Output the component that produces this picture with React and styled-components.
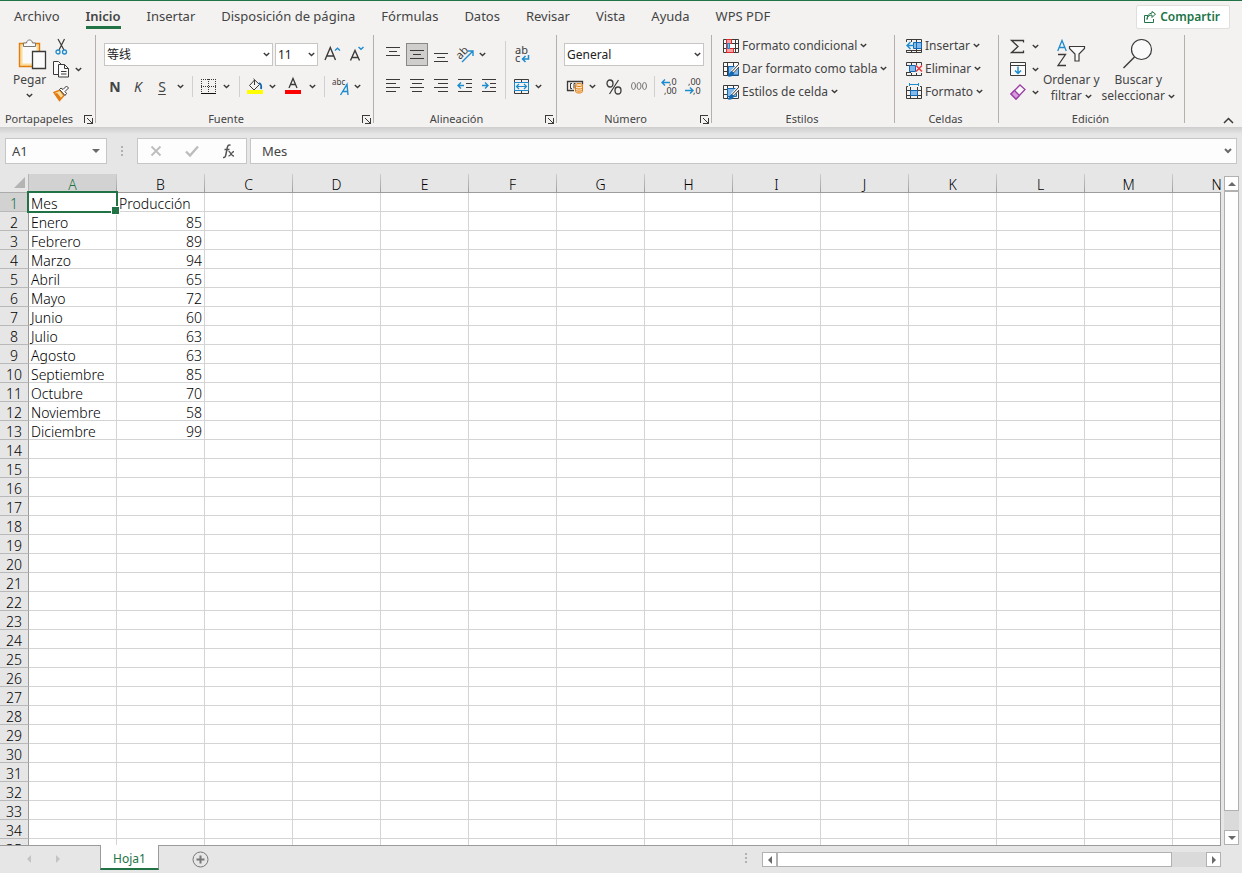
import React from "react";
import styled, { createGlobalStyle, css } from "styled-components";

const INK = "#3b3a39";
const BLUE = "#1e8bcd";
const GREEN = "#217346";

const GlobalStyle = createGlobalStyle`
  * {
    box-sizing: border-box;
  }
  body {
    margin: 0;
    background: #e6e6e6;
    color: #444444;
    font-family: "Noto Sans", "Noto Sans CJK SC", sans-serif;
    font-size: 12px;
    line-height: 16px;
  }
  button, input, select {
    margin: 0;
    padding: 0;
    border: 0;
    background: none;
    color: inherit;
    font: inherit;
  }
  svg {
    display: block;
    flex: none;
    overflow: visible;
  }
`;

const Page = styled.div`
  display: flex;
  flex-direction: column;
  height: 100vh;
  overflow: hidden;
`;

/* ---------- ribbon ---------- */

const Ribbon = styled.header`
  border-top: 1px solid ${GREEN};
  background: #f3f2f1;
`;

const TabBar = styled.nav`
  display: flex;
  align-items: center;
  gap: 26px;
  height: 34px;
  padding: 0 12px 2px 14px;
  font-size: 13px;
`;

const TabLink = styled.a`
  height: 24px;
  padding-top: 3px;
  border-bottom: 3px solid ${(p) => (p.$active ? GREEN : "transparent")};
  color: #444444;
  font-weight: ${(p) => (p.$active ? 600 : 400)};
  line-height: 17px;
  text-decoration: none;
  white-space: nowrap;
`;

const ShareButton = styled.button`
  display: flex;
  align-items: center;
  gap: 4px;
  height: 24px;
  margin-left: auto;
  padding: 0 9px 0 7px;
  border: 1px solid #e1dfdd;
  border-radius: 2px;
  background: #ffffff;
  color: ${GREEN};
  font-size: 12px;
  font-weight: 600;
`;

const RibbonBody = styled.div`
  display: flex;
  height: 92px;
`;

const Group = styled.section`
  position: relative;
  display: flex;
  flex-direction: column;
  min-width: ${(p) => p.$width}px;
  padding-left: ${(p) => p.$pad || 0}px;

  &::after {
    content: "";
    position: absolute;
    top: 0;
    right: 0;
    bottom: 4px;
    width: 1px;
    background: #b3b0ad;
  }
`;

const GroupBody = styled.div`
  display: flex;
  flex: 1;
  gap: ${(p) => p.$gap || 0}px;
`;

const GroupFooter = styled.div`
  display: flex;
  align-items: center;
  gap: 6px;
  height: 16px;
  margin-left: -${(p) => p.$pad || 0}px;
  padding-right: 3px;
  font-size: 11px;
`;

const GroupLabel = styled.h2`
  flex: 1;
  margin: 0;
  font-size: inherit;
  font-weight: 400;
  text-align: center;
`;

const Rows = styled.div`
  display: flex;
  flex-direction: column;
  gap: ${(p) => p.$gap || 0}px;
  padding-top: ${(p) => p.$top || 0}px;
`;

const Row = styled.div`
  display: flex;
  align-items: center;
  gap: ${(p) => p.$gap || 0}px;
  height: 23px;
`;

const ToolButton = styled.button`
  display: flex;
  align-items: center;
  justify-content: center;
  width: ${(p) => p.$width || 22}px;
  height: 23px;
  ${(p) =>
    p.$active &&
    css`
      border: 1px solid #8a8886;
      background: #cfcecd;
    `}
`;

const TextButton = styled.button`
  display: flex;
  align-items: center;
  gap: 3px;
  height: 23px;
  padding-bottom: 2px;
  white-space: nowrap;
`;

const BigButton = styled.button`
  display: flex;
  flex-direction: column;
  align-items: center;
  padding-top: 4px;
  white-space: nowrap;

  svg + span {
    margin-top: 2px;
  }
  > span + svg {
    margin-top: 5px;
  }
`;

const CaptionLine = styled.span`
  display: flex;
  align-items: center;
  gap: 3px;
`;

const Letter = styled.span`
  font-size: 14px;
  font-weight: ${(p) => (p.$bold ? 700 : 400)};
  font-style: ${(p) => (p.$italic ? "italic" : "normal")};
  text-decoration: ${(p) => (p.$underline ? "underline" : "none")};
  text-underline-offset: 2px;
`;

const Divider = styled.span`
  width: 1px;
  height: ${(p) => p.$height || 21}px;
  margin: 0 ${(p) => p.$margin || 6}px;
  background: #d2d0ce;
`;

const SelectWrap = styled.label`
  display: grid;
  align-items: center;
  width: ${(p) => p.$width}px;
  height: 23px;

  select,
  svg {
    grid-area: 1 / 1;
  }
  svg {
    justify-self: end;
    margin-right: 3px;
    pointer-events: none;
  }
`;

const Select = styled.select`
  width: 100%;
  height: 23px;
  padding: 0 2px;
  border: 1px solid #c8c6c4;
  border-radius: 0;
  background: #ffffff;
  color: #222222;
  appearance: none;
`;

const CollapseButton = styled.button`
  align-self: flex-end;
  margin-left: auto;
  padding: 0 8px 3px;
`;

/* ---------- formula bar ---------- */

const FormulaBar = styled.div`
  display: flex;
  height: 47px;
  padding: 11px 5px 0;
  background: linear-gradient(#cdcdcd, #e6e6e6 7px);
  font-size: 13px;
`;

const NameBox = styled.label`
  display: flex;
  align-items: center;
  width: 102px;
  height: 26px;
  padding-right: 6px;
  border: 1px solid #c6c6c6;
  background: #fdfdfd;
`;

const BarInput = styled.input`
  flex: 1;
  min-width: 0;
  height: 24px;
  padding-left: ${(p) => p.$pad}px;
  outline: none;
`;

const Grip = styled.span`
  display: flex;
  align-items: center;
  justify-content: center;
  width: 30px;
  height: 26px;
`;

const FormulaButtons = styled.div`
  display: flex;
  align-items: center;
  width: 110px;
  height: 26px;
  margin-right: 3px;
  border: 1px solid #c6c6c6;
  background: #fdfdfd;

  button {
    display: flex;
    flex: 1;
    justify-content: center;
  }
`;

const FormulaField = styled.div`
  display: flex;
  flex: 1;
  align-items: center;
  height: 26px;
  padding-right: 4px;
  border: 1px solid #c6c6c6;
  background: #fdfdfd;
`;

/* ---------- sheet ---------- */

const SheetArea = styled.main`
  display: flex;
  flex: 1;
  min-height: 0;
`;

const GridViewport = styled.div`
  position: relative;
  flex: 1;
  min-width: 0;
  overflow: hidden;

  &::after {
    content: "";
    position: absolute;
    top: 18px;
    right: 0;
    bottom: 0;
    width: 1px;
    background: #9b9b9b;
  }
`;

const SheetTable = styled.table`
  width: 1261px;
  border-spacing: 0;
  table-layout: fixed;
  color: #000000;
  font-size: 14px;
  font-weight: 350;
  line-height: 14px;
`;

const headFill = css`
  background-color: ${(p) => (p.$active ? "#d2d2d2" : "#e6e6e6")};
  color: ${(p) => (p.$active ? GREEN : "#000000")};
  font-weight: 350;
`;

const ColumnHead = styled.th`
  ${headFill}
  height: 19px;
  padding: 4px 0 0;
  border-right: 1px solid;
  border-image: linear-gradient(#d0d0d0, #9b9b9b) 1;
  border-bottom: 1px solid #9b9b9b;
  text-align: center;
`;

const Corner = styled.th`
  width: 29px;
  height: 19px;
  padding: 0 0 0 14px;
  border-right: 1px solid #b5b5b5;
  border-bottom: 1px solid #ababab;
  background: #e6e6e6;
`;

const RowHead = styled.th`
  ${headFill}
  height: 19px;
  padding: 4px 0 0;
  border-right: 1px solid #9b9b9b;
  border-bottom: 1px solid #b9b9b9;
  text-align: center;
`;

const Cell = styled.td`
  position: relative;
  height: 19px;
  padding: 4px 2px 0;
  border-right: 1px solid #d4d4d4;
  border-bottom: 1px solid #d4d4d4;
  background: #ffffff;
  text-align: ${(p) => (p.$number ? "right" : "left")};
  white-space: nowrap;
`;

const Selection = styled.span`
  position: absolute;
  inset: -2px;
  z-index: 1;
  border: 2px solid ${GREEN};

  &::after {
    content: "";
    position: absolute;
    right: -4px;
    bottom: -4px;
    width: 7px;
    height: 7px;
    border: 1px solid #ffffff;
    background: ${GREEN};
  }
`;

const ScrollColumn = styled.div`
  display: flex;
  flex-direction: column;
  width: 21px;
  padding: 2px 3px 0;
`;

const ScrollRow = styled.div`
  display: flex;
  flex: 0 1 459px;
  height: 15px;
  margin: 7px 21px 0 1px;
`;

const ScrollButton = styled.button`
  display: flex;
  flex: none;
  align-items: center;
  justify-content: center;
  width: 15px;
  height: 15px;
  border: 1px solid #b1b1b1;
  background: #ffffff;
`;

const Track = styled.div`
  display: flex;
  flex: 1;
  flex-direction: ${(p) => (p.$vertical ? "column" : "row")};
  background: #dadada;
`;

const Thumb = styled.div`
  flex: 0 0 ${(p) => p.$size};
  border: 1px solid #b1b1b1;
  background: #ffffff;
`;

const SheetBar = styled.footer`
  display: flex;
  height: 28px;
  background: linear-gradient(to right, #9b9b9b calc(100% - 21px), #e6e6e6 0) top / 100% 1px no-repeat;
`;

const SheetNav = styled.div`
  display: flex;
  align-items: center;
  gap: 23px;
  width: 100px;
  padding-left: 26px;
`;

const SheetTab = styled.a`
  height: 25px;
  padding: 6px 12px 0;
  border: 1px solid #9b9b9b;
  border-top: 0;
  border-bottom: 2px solid ${GREEN};
  background: #ffffff;
  color: ${GREEN};
  text-decoration: none;
`;

const AddSheet = styled.button`
  display: flex;
  align-items: center;
  margin: 0 auto 0 33px;
`;

/* ---------- icons ---------- */

const Icon = ({ w = 16, h = 16, crisp, children }) => (
  <svg
    width={w}
    height={h}
    viewBox={`0 0 ${w} ${h}`}
    fill="none"
    stroke={INK}
    shapeRendering={crisp ? "crispEdges" : undefined}
    aria-hidden="true"
  >
    {children}
  </svg>
);

const Chevron = () => (
  <Icon w={7} h={5}>
    <path d="M.8 1l2.7 2.6L6.2 1" strokeWidth="1.4" />
  </Icon>
);

const PasteIcon = () => (
  <Icon w={32} h={31}>
    <g transform="translate(4)">
      <path d="M1.500 4.500h20v23h-20z" fill="#fbdc9a" stroke="#e07c10" strokeWidth="1.400" />
      <path d="M4.500 7.500h14v17h-14z" fill="#fafafa" stroke="none" />
      <path d="M5.500 7.500v-3.500h3c.3-2 1.300-3 3-3s2.700 1 3 3h3v3.500z" fill="#fafafa" stroke="#7a7876" />
      <path d="M14.500 12.500h13v17h-13z" fill="#fafafa" strokeWidth="1.300" />
    </g>
  </Icon>
);

const CutIcon = () => (
  <Icon w={15}>
    <path d="M4 0l6 11M10.500 0L5 11" strokeWidth="1.200" />
    <circle cx="4" cy="13" r="2" stroke={BLUE} strokeWidth="1.300" />
    <circle cx="10.500" cy="13" r="2" stroke={BLUE} strokeWidth="1.300" />
  </Icon>
);

const CopyIcon = () => (
  <Icon w={17} h={17}>
    <path d="M5.500 13.500h-5V.5h5l3 3M5.500 3.500h6l4 4v8.500h-10z" fill="#fafafa" />
    <path d="M11.500 3.500v4h4M8 10.500h5.500M8 13h5.500" />
  </Icon>
);

const BrushIcon = () => (
  <Icon>
    <path d="M1 7.500l6-2.500 4 5.500-4.500 5z" fill="#fbdc9a" stroke="#e07c10" strokeWidth="1.400" />
    <path d="M3 8.500l4.500 5.500" stroke="#e07c10" strokeWidth="2.400" />
    <path d="M6.500 4.500l5.500 6 1.500-2-1.500-2 3.500-3.500-2-2-3.500 3.500-2-1.500z" fill="#fafafa" />
  </Icon>
);

const LauncherIcon = () => (
  <Icon w={9} h={9} crisp>
    <path d="M.5 8V.5H8M8.500 3v5.500H3M3 3l5 5" />
  </Icon>
);

const FontSizeIcon = ({ small }) => (
  <Icon w={17} h={18}>
    {small ? (
      <path d="M1.500 14.500L6 4.500l4.500 10M3 11.500h6" strokeWidth="1.400" />
    ) : (
      <path d="M1 14L6.300 1.500 11.500 14M3 10h6.600" strokeWidth="1.400" />
    )}
    <path d={small ? "M9.500 1l2.500 2.300L14.500 1" : "M11 4.500l2.500-2.300L16 4.500"} stroke={BLUE} strokeWidth="1.400" />
  </Icon>
);

const BordersIcon = () => (
  <Icon crisp>
    <path d="M.5 0v14M14.500 0v14M7.500 0v14M0 .5h15M0 7.500h15" strokeDasharray="1 1" />
    <path d="M0 14.500h15" stroke="#111111" />
  </Icon>
);

const FillIcon = () => (
  <Icon w={16} h={17}>
    <path d="M7.500 2L2.500 7.500 7 12l5.500-5.500L6.500.8M7.500 2v5" />
    <path d="M12 5c2 .5 2.500 3 2 6" stroke="#1268b3" strokeWidth="1.800" />
    <path d="M0 12h16v4H0z" fill="#ffff00" stroke="none" />
  </Icon>
);

const FontColorIcon = () => (
  <Icon w={16} h={17}>
    <path d="M4 10L8 .5 12 10M5.500 6.500h5" strokeWidth="1.300" />
    <path d="M0 12h16v4H0z" fill="#ff0000" stroke="none" />
  </Icon>
);

const PhoneticIcon = () => (
  <Icon w={18} h={18}>
    <text x="0" y="7" fontSize="8" fill={INK} stroke="none">abc</text>
    <path d="M8.500 17l6.500-10.500 1 10.500M10.500 13.500h5.500" stroke={BLUE} strokeWidth="1.400" />
  </Icon>
);

// Each entry is a horizontal stroke: [start, end, y]
const LinesIcon = ({ lines, arrow }) => (
  <Icon w={15} h={15} crisp>
    {lines.map(([x1, x2, y]) => (
      <path key={y} d={`M${x1} ${y + 0.5}H${x2}`} />
    ))}
    {arrow && (
      <path
        d={arrow === "left" ? "M6 6.500H0M3 3.500l-3 3 3 3" : "M0 6.500h6M3 3.500l3 3-3 3"}
        stroke={BLUE}
        strokeWidth="1.400"
        shapeRendering="auto"
      />
    )}
  </Icon>
);

const OrientationIcon = () => (
  <Icon w={17} h={16}>
    <text x="0" y="10" fontSize="11" fill={INK} stroke="none" transform="rotate(-45 5 8)">ab</text>
    <path d="M5 15L15.500 4.500M10.500 4h5.500v5" stroke={BLUE} strokeWidth="1.400" />
  </Icon>
);

const WrapIcon = () => (
  <Icon w={15} h={18}>
    <text x="0" y="8" fontSize="11" fill={INK} stroke="none">ab</text>
    <text x="0" y="16" fontSize="11" fill={INK} stroke="none">c</text>
    <path d="M13.500 9v4H7.500M10.500 10l-3 3 3 3" stroke={BLUE} strokeWidth="1.500" />
  </Icon>
);

const MergeIcon = () => (
  <Icon w={15} h={15}>
    <path d="M.5.5h14v14H.5zM7.500 0v3M7.500 12v3" />
    <path d="M.5 3.500h14v8H.5z" fill="#f3f2f1" stroke={BLUE} />
    <path d="M2.500 7.500h10M5 5l-2.500 2.500L5 10M10 5l2.500 2.500L10 10" stroke={BLUE} strokeWidth="1.200" />
  </Icon>
);

const CurrencyIcon = () => (
  <Icon w={17} h={15}>
    <path d="M7 11.500H.5v-9h15v3" strokeWidth="1.300" />
    <path d="M5 4.500H3.500v5H5M8.500 4.500H7v5M12 4.500h-1.500" />
    <path d="M8.500 6v6.500c0 2 7 2 7 0V6" fill="#fce3c3" stroke="#e07c10" />
    <ellipse cx="12" cy="6" rx="3.500" ry="1.500" fill="#fce3c3" stroke="#e07c10" />
    <path d="M8.500 8.500c0 2 7 2 7 0M8.500 10.700c0 2 7 2 7 0" stroke="#e07c10" />
  </Icon>
);

const PercentIcon = () => (
  <Icon w={16} h={16}>
    <ellipse cx="4" cy="4.500" rx="3" ry="3.500" strokeWidth="1.300" />
    <ellipse cx="12" cy="11.500" rx="3" ry="3.500" strokeWidth="1.300" />
    <path d="M12.500 1l-9 14" strokeWidth="1.200" />
  </Icon>
);

const ThousandsIcon = () => (
  <Icon w={17} h={12}>
    {[2.5, 8, 13.5].map((x) => (
      <ellipse key={x} cx={x} cy="5" rx="2" ry="3.500" stroke="#7a7876" />
    ))}
  </Icon>
);

const DecimalIcon = ({ less }) => (
  <Icon w={17} h={17}>
    <text x={less ? 3 : 8} y="7" fontSize="9" fill={INK} stroke="none">{less ? ",00" : ",0"}</text>
    <text x={less ? 8 : 3} y="16" fontSize="9" fill={INK} stroke="none">{less ? ",0" : ",00"}</text>
    <path
      d={less ? "M0 12.500h8M5 9.500l3 3-3 3" : "M9 4.500H1M4 1.500l-3 3 3 3"}
      stroke={BLUE}
      strokeWidth="1.400"
    />
  </Icon>
);

const ConditionalIcon = () => (
  <Icon>
    <path d="M.5 1.500h15v13H.5z" fill="#fafafa" />
    <path d="M0 5.500h16M0 10.500h16M4.500 1v14M12.500 1v14" />
    <path d="M3.500 1.500h5v4h-5zM3.500 10.500h7v4h-7z" fill="#f7a1a6" stroke="#e02b2b" />
    <path d="M4.500 5.500h2v5h-2z" fill="#83b9ea" stroke={BLUE} />
    <path d="M3.500 5v6" stroke="#e02b2b" />
  </Icon>
);

const PenIcon = ({ table }) => (
  <Icon>
    <path d="M.5 1.500h15v13H.5z" fill="#fafafa" />
    <path d="M0 5.500h16M0 10.500h5M4.500 1v14M10.500 1v4" />
    {table ? (
      <path d="M5.500 5.500h10V14h-10z" fill="#83b9ea" stroke="#1268b3" />
    ) : (
      <path d="M4.500 4.500h9v8h-9z" fill="#83b9ea" stroke="#1268b3" />
    )}
    <path d="M15.500 4L9 11.500" stroke="#f3f2f1" strokeWidth="4" />
    <path d="M15.500 3.500L9 10.500l1.500 1.500L16 6" fill="#fafafa" />
    <path d="M9 10.500c-2 0-2 3-4 4.500 3 .5 5.500-.5 5.500-3z" fill="#1268b3" stroke="#1268b3" />
  </Icon>
);

const InsertCellsIcon = () => (
  <Icon>
    <path d="M.5 4V1.500h15v13H.5V12M5.500 1v3M10.500 1v14M0 12.500h16M5.500 12v3" />
    <path d="M7.500 4.500h8v6h-8z" fill="#83b9ea" stroke="#1268b3" />
    <path d="M10.500 5v6" stroke="#1268b3" />
    <path d="M8 7.500H1M4.500 4L1 7.500 4.500 11" stroke={BLUE} strokeWidth="1.400" />
  </Icon>
);

const DeleteCellsIcon = () => (
  <Icon>
    <path d="M.5 4.500V1.500h15v3M5.500 1v3M10.500 1v3M.5 12v2.500h15V12M5.500 12v3M10.500 12v3M0 4.500h5M0 11.500h5" />
    <path d="M3.500 4.500h6v6h-6z" fill="#83b9ea" stroke="#1268b3" />
    <path d="M10 4.500l6 6M16 4.500l-6 6" stroke="#e8393f" strokeWidth="1.500" />
  </Icon>
);

const FormatCellsIcon = () => (
  <Icon>
    <path d="M3 .5h10M3.500-1v3M12.500-1v3" stroke={BLUE} />
    <path d="M2 2.500H.5v12h15v-12H14M4.500 3v12M11.500 3v12M0 6.500h16M0 11.500h16" />
    <path d="M4.500 6.500h7v5h-7z" fill="#83b9ea" stroke="#1268b3" />
  </Icon>
);

const SumIcon = () => (
  <Icon w={16} h={16}>
    <path d="M13.500 3.500v-2h-12L8 7.500l-6.500 6h12v-2" strokeWidth="1.300" />
  </Icon>
);

const FillDownIcon = () => (
  <Icon>
    <path d="M.5 .5h15v13H.5zM.5 3.500h15" fill="#fafafa" />
    <path d="M8 4.500v7M5 8.500l3 3 3-3" stroke={BLUE} strokeWidth="1.500" />
  </Icon>
);

const EraserIcon = () => (
  <Icon>
    <path d="M1 9L10 0l5 4.500-9 9.500z" fill="#fafafa" stroke="#9b3fa5" strokeWidth="1.300" />
    <path d="M1 9l3.500-3.500 5 5L6 14z" fill="#d89bdd" stroke="#9b3fa5" strokeWidth="1.300" />
  </Icon>
);

const SortIcon = () => (
  <Icon w={28} h={31}>
    <path d="M.7 12L5 1.500 9.300 12M2.300 8.500h5.500" stroke={BLUE} strokeWidth="1.300" />
    <path d="M1 15.500h7.500L1 26.500h8" strokeWidth="1.300" />
    <path d="M12.500 7.500h15v2l-5.500 5.500v7h-4v-7l-5.500-5.500z" fill="#fafafa" strokeWidth="1.200" />
  </Icon>
);

const SearchIcon = () => (
  <Icon w={30} h={31}>
    <circle cx="18.500" cy="10.500" r="10" fill="#fafafa" strokeWidth="1.200" />
    <path d="M11.500 18L.5 29" strokeWidth="1.400" />
  </Icon>
);

const ShareIcon = () => (
  <Icon w={12} h={12}>
    <path d="M4 4.500H.5v7h9V8M3 8.500c.5-3 2-4.500 5-4.500V6.500l3.500-3.500L8 .5V2C4.500 2.500 3 5 3 8.500z" stroke={GREEN} />
  </Icon>
);

const GripIcon = () => (
  <Icon w={2} h={10} crisp>
    <path d="M0 0h2v2H0zM0 4h2v2H0zM0 8h2v2H0z" fill="#b1b1b1" stroke="none" />
  </Icon>
);

const FxIcon = () => (
  <Icon w={13} h={15}>
    <path d="M1 13.500c2 .5 2.500-1 3-3.500l1.200-6C5.700 1.500 6.500.5 8.500 1.300M2.500 5.500h5" stroke="#555555" strokeWidth="1.500" />
    <path d="M6.500 7.500c2-.5 2.500 5 5.500 4.500M12 7.500c-2.500 0-3 4.500-5.500 4.500" stroke="#555555" strokeWidth="1.300" />
  </Icon>
);

const TRIANGLES = {
  left: "M5 0v8L1 4z",
  right: "M1 0v8l4-4z",
  up: "M0 5h8L4 1z",
  down: "M0 1h8L4 5z",
};

const Triangle = ({ dir, color = "#6a6a6a" }) => {
  const flat = dir === "up" || dir === "down";
  return (
    <Icon w={flat ? 8 : 6} h={flat ? 6 : 8}>
      <path d={TRIANGLES[dir]} fill={color} stroke="none" />
    </Icon>
  );
};

/* ---------- data ---------- */

const TABS = [
  "Archivo",
  "Inicio",
  "Insertar",
  "Disposición de página",
  "Fórmulas",
  "Datos",
  "Revisar",
  "Vista",
  "Ayuda",
  "WPS PDF",
];

const COLUMNS = "ABCDEFGHIJKLMN".split("");

const DATA = [
  ["Mes", "Producción"],
  ["Enero", 85],
  ["Febrero", 89],
  ["Marzo", 94],
  ["Abril", 65],
  ["Mayo", 72],
  ["Junio", 60],
  ["Julio", 63],
  ["Agosto", 63],
  ["Septiembre", 85],
  ["Octubre", 70],
  ["Noviembre", 58],
  ["Diciembre", 99],
];

const ROW_COUNT = 35;

const ALIGN = {
  top: [[0, 14, 0], [3, 11, 4], [0, 14, 8]],
  middle: [[0, 14, 3], [3, 11, 7], [0, 14, 11]],
  bottom: [[0, 14, 6], [3, 11, 10], [0, 14, 14]],
  left: [[0, 14, 0], [0, 10, 4], [0, 14, 8], [0, 10, 12]],
  center: [[0, 14, 0], [2, 12, 4], [0, 14, 8], [2, 12, 12]],
  right: [[0, 14, 0], [4, 14, 4], [0, 14, 8], [4, 14, 12]],
  indent: [[0, 14, 0], [8, 14, 4], [8, 14, 8], [0, 14, 12]],
};

/* ---------- components ---------- */

const Dropdown = ({ label, value, width }) => (
  <SelectWrap $width={width}>
    <Select aria-label={label} defaultValue={value}>
      <option>{value}</option>
    </Select>
    <Chevron />
  </SelectWrap>
);

const Tool = ({ label, width, active, children }) => (
  <ToolButton type="button" aria-label={label} $width={width} $active={active}>
    {children}
  </ToolButton>
);

const Arrow = ({ label, width = 12 }) => (
  <ToolButton type="button" aria-label={label} $width={width}>
    <Chevron />
  </ToolButton>
);

const Labeled = ({ icon, children }) => (
  <TextButton type="button">
    {icon}
    <span>{children}</span>
    <Chevron />
  </TextButton>
);

const RibbonGroup = ({ title, width, pad, gap, launcher, children }) => (
  <Group $width={width} $pad={pad}>
    <GroupBody $gap={gap}>{children}</GroupBody>
    <GroupFooter $pad={pad}>
      <GroupLabel>{title}</GroupLabel>
      {launcher && (
        <button type="button" aria-label={`Opciones de ${title}`}>
          <LauncherIcon />
        </button>
      )}
    </GroupFooter>
  </Group>
);

const Clipboard = () => (
  <RibbonGroup title="Portapapeles" width={96} pad={13} gap={5} launcher>
    <BigButton type="button">
      <PasteIcon />
      <span>Pegar</span>
      <Chevron />
    </BigButton>
    <Rows>
      <Row>
        <Tool label="Cortar" width={20}><CutIcon /></Tool>
      </Row>
      <Row>
        <Tool label="Copiar" width={20}><CopyIcon /></Tool>
        <Arrow label="Opciones de copia" width={14} />
      </Row>
      <Row>
        <Tool label="Copiar formato" width={20}><BrushIcon /></Tool>
      </Row>
    </Rows>
  </RibbonGroup>
);

const FontGroup = () => (
  <RibbonGroup title="Fuente" width={278} pad={8} launcher>
    <Rows $top={8} $gap={9}>
      <Row $gap={2}>
        <Dropdown label="Fuente" value="等线" width={169} />
        <Dropdown label="Tamaño de fuente" value="11" width={43} />
        <Tool label="Aumentar tamaño" width={24}><FontSizeIcon /></Tool>
        <Tool label="Reducir tamaño"><FontSizeIcon small /></Tool>
      </Row>
      <Row>
        <Tool label="Negrita"><Letter $bold>N</Letter></Tool>
        <Tool label="Cursiva" width={24}><Letter $italic>K</Letter></Tool>
        <Tool label="Subrayado" width={24}><Letter $underline>S</Letter></Tool>
        <Arrow label="Opciones de subrayado" />
        <Divider />
        <Tool label="Bordes" width={20}><BordersIcon /></Tool>
        <Arrow label="Opciones de bordes" width={14} />
        <Divider />
        <Tool label="Color de relleno" width={18}><FillIcon /></Tool>
        <Arrow label="Opciones de relleno" width={16} />
        <Tool label="Color de fuente" width={26}><FontColorIcon /></Tool>
        <Arrow label="Opciones de color" />
        <Divider />
        <Tool label="Guía fonética" width={20}><PhoneticIcon /></Tool>
        <Arrow label="Opciones de guía" />
      </Row>
    </Rows>
  </RibbonGroup>
);

const AlignGroup = () => (
  <RibbonGroup title="Alineación" width={183} pad={8} launcher>
    <Rows $top={8} $gap={9}>
      <Row $gap={2}>
        <Tool label="Alinear arriba"><LinesIcon lines={ALIGN.top} /></Tool>
        <Tool label="Alinear en el medio" active><LinesIcon lines={ALIGN.middle} /></Tool>
        <Tool label="Alinear abajo"><LinesIcon lines={ALIGN.bottom} /></Tool>
        <Tool label="Orientación"><OrientationIcon /></Tool>
        <Arrow label="Opciones de orientación" width={8} />
      </Row>
      <Row $gap={2}>
        <Tool label="Alinear a la izquierda"><LinesIcon lines={ALIGN.left} /></Tool>
        <Tool label="Centrar"><LinesIcon lines={ALIGN.center} /></Tool>
        <Tool label="Alinear a la derecha"><LinesIcon lines={ALIGN.right} /></Tool>
        <Tool label="Disminuir sangría"><LinesIcon lines={ALIGN.indent} arrow="left" /></Tool>
        <Tool label="Aumentar sangría"><LinesIcon lines={ALIGN.indent} arrow="right" /></Tool>
      </Row>
    </Rows>
    <Rows $top={6}>
      <Divider $height={58} $margin={5} />
    </Rows>
    <Rows $top={8} $gap={9}>
      <Row>
        <Tool label="Ajustar texto"><WrapIcon /></Tool>
      </Row>
      <Row>
        <Tool label="Combinar y centrar" width={20}><MergeIcon /></Tool>
        <Arrow label="Opciones de combinación" width={14} />
      </Row>
    </Rows>
  </RibbonGroup>
);

const NumberGroup = () => (
  <RibbonGroup title="Número" width={155} pad={7} launcher>
    <Rows $top={8} $gap={9}>
      <Row>
        <Dropdown label="Formato de número" value="General" width={140} />
      </Row>
      <Row>
        <Tool label="Formato de contabilidad"><CurrencyIcon /></Tool>
        <Arrow label="Opciones de moneda" />
        <Tool label="Porcentaje" width={32}><PercentIcon /></Tool>
        <Tool label="Estilo millares" width={18}><ThousandsIcon /></Tool>
        <Divider />
        <Row $gap={8}>
          <Tool label="Aumentar decimales" width={16}><DecimalIcon /></Tool>
          <Tool label="Disminuir decimales" width={16}><DecimalIcon less /></Tool>
        </Row>
      </Row>
    </Rows>
  </RibbonGroup>
);

const StylesGroup = () => (
  <RibbonGroup title="Estilos" width={183} pad={11}>
    <Rows>
      <Labeled icon={<ConditionalIcon />}>Formato condicional</Labeled>
      <Labeled icon={<PenIcon table />}>Dar formato como tabla</Labeled>
      <Labeled icon={<PenIcon />}>Estilos de celda</Labeled>
    </Rows>
  </RibbonGroup>
);

const CellsGroup = () => (
  <RibbonGroup title="Celdas" width={104} pad={11}>
    <Rows>
      <Labeled icon={<InsertCellsIcon />}>Insertar</Labeled>
      <Labeled icon={<DeleteCellsIcon />}>Eliminar</Labeled>
      <Labeled icon={<FormatCellsIcon />}>Formato</Labeled>
    </Rows>
  </RibbonGroup>
);

const EditGroup = () => (
  <RibbonGroup title="Edición" width={186} pad={8} gap={2}>
    <Rows>
      {[
        ["Autosuma", <SumIcon />],
        ["Rellenar", <FillDownIcon />],
        ["Borrar", <EraserIcon />],
      ].map(([label, icon]) => (
        <Row key={label}>
          <Tool label={label}>{icon}</Tool>
          <Arrow label={`Opciones de ${label}`} />
        </Row>
      ))}
    </Rows>
    <BigButton type="button">
      <SortIcon />
      <span>Ordenar y</span>
      <CaptionLine>filtrar <Chevron /></CaptionLine>
    </BigButton>
    <BigButton type="button">
      <SearchIcon />
      <span>Buscar y</span>
      <CaptionLine>seleccionar <Chevron /></CaptionLine>
    </BigButton>
  </RibbonGroup>
);

const Sheet = () => (
  <SheetTable>
    <thead>
      <tr>
        <Corner aria-label="Seleccionar todo">
          <Icon w={12} h={12}>
            <path d="M11 0v11H0z" fill="#b4b4b4" stroke="none" />
          </Icon>
        </Corner>
        {COLUMNS.map((name, i) => (
          <ColumnHead key={name} scope="col" $active={i === 0}>{name}</ColumnHead>
        ))}
      </tr>
    </thead>
    <tbody>
      {Array.from({ length: ROW_COUNT }, (_, r) => (
        <tr key={r}>
          <RowHead scope="row" $active={r === 0}>{r + 1}</RowHead>
          {COLUMNS.map((name, c) => {
            const value = DATA[r]?.[c];
            return (
              <Cell key={name} $number={typeof value === "number"}>
                {value}
                {r === 0 && c === 0 && <Selection />}
              </Cell>
            );
          })}
        </tr>
      ))}
    </tbody>
  </SheetTable>
);

const App = () => {
  return (
    <>
      <GlobalStyle />
      <Page>
        <Ribbon>
          <TabBar>
            {TABS.map((tab) => (
              <TabLink key={tab} href="#" $active={tab === "Inicio"}>{tab}</TabLink>
            ))}
            <ShareButton type="button">
              <ShareIcon />
              Compartir
            </ShareButton>
          </TabBar>
          <RibbonBody>
            <Clipboard />
            <FontGroup />
            <AlignGroup />
            <NumberGroup />
            <StylesGroup />
            <CellsGroup />
            <EditGroup />
            <CollapseButton type="button" aria-label="Contraer la cinta">
              <Icon w={11} h={7}>
                <path d="M1 6l4.500-4.500L10 6" strokeWidth="1.500" />
              </Icon>
            </CollapseButton>
          </RibbonBody>
        </Ribbon>

        <FormulaBar>
          <NameBox>
            <BarInput aria-label="Cuadro de nombres" defaultValue="A1" $pad={6} />
            <Triangle dir="down" />
          </NameBox>
          <Grip><GripIcon /></Grip>
          <FormulaButtons>
            <button type="button" aria-label="Cancelar">
              <Icon w={12} h={12}>
                <path d="M1.500 1.500l9 9M10.500 1.500l-9 9" stroke="#bdbdbd" strokeWidth="1.800" />
              </Icon>
            </button>
            <button type="button" aria-label="Introducir">
              <Icon w={14} h={12}>
                <path d="M1 6.500l4 4L13 1.500" stroke="#bdbdbd" strokeWidth="2.400" />
              </Icon>
            </button>
            <button type="button" aria-label="Insertar función">
              <FxIcon />
            </button>
          </FormulaButtons>
          <FormulaField>
            <BarInput aria-label="Barra de fórmulas" defaultValue="Mes" $pad={11} />
            <Icon w={8} h={6}>
              <path d="M1 1l3 3 3-3" stroke="#6a6a6a" strokeWidth="2" />
            </Icon>
          </FormulaField>
        </FormulaBar>

        <SheetArea>
          <GridViewport>
            <Sheet />
          </GridViewport>
          <ScrollColumn>
            <ScrollButton type="button" aria-label="Subir"><Triangle dir="up" /></ScrollButton>
            <Track $vertical>
              <Thumb $size="97%" />
            </Track>
            <ScrollButton type="button" aria-label="Bajar"><Triangle dir="down" /></ScrollButton>
          </ScrollColumn>
        </SheetArea>

        <SheetBar>
          <SheetNav>
            <Triangle dir="left" color="#c3c3c3" />
            <Triangle dir="right" color="#c3c3c3" />
          </SheetNav>
          <SheetTab href="#">Hoja1</SheetTab>
          <AddSheet type="button" aria-label="Hoja nueva">
            <Icon w={17} h={17}>
              <circle cx="8.500" cy="8.500" r="7.500" stroke="#777777" />
              <path d="M8.500 4.500v8M4.500 8.500h8" stroke="#777777" strokeWidth="2" />
            </Icon>
          </AddSheet>
          <Grip><GripIcon /></Grip>
          <ScrollRow>
            <ScrollButton type="button" aria-label="Izquierda"><Triangle dir="left" /></ScrollButton>
            <Track>
              <Thumb $size="92%" />
            </Track>
            <ScrollButton type="button" aria-label="Derecha"><Triangle dir="right" /></ScrollButton>
          </ScrollRow>
        </SheetBar>
      </Page>
    </>
  );
};

export default App;
